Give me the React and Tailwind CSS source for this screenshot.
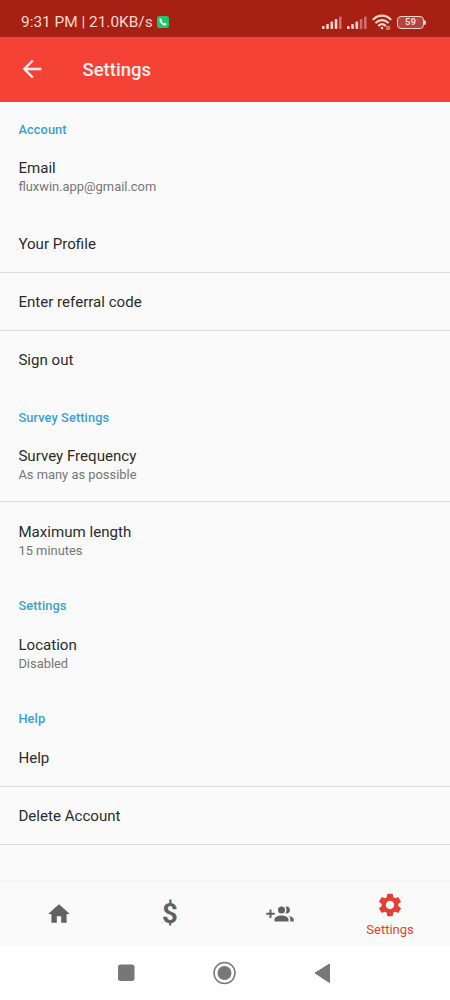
import { MdHome, MdSettings, MdArrowBack } from 'react-icons/md';

const sections = [
  {
    title: 'Account',
    rows: [
      { label: 'Email', value: 'fluxwin.app@gmail.com' },
      { label: 'Your Profile', divider: true },
      { label: 'Enter referral code', divider: true },
      { label: 'Sign out' },
    ],
  },
  {
    title: 'Survey Settings',
    rows: [
      { label: 'Survey Frequency', value: 'As many as possible', divider: true },
      { label: 'Maximum length', value: '15 minutes' },
    ],
  },
  { title: 'Settings', rows: [{ label: 'Location', value: 'Disabled' }] },
  {
    title: 'Help',
    rows: [
      { label: 'Help', divider: true },
      { label: 'Delete Account', divider: true },
    ],
  },
];

// Five bars, the ones above `level` are dimmed
function Signal({ level }) {
  return (
    <svg width="20" height="13" viewBox="0 0 20 13" fill="#f8d5cf">
      {[3, 5, 7.5, 10, 12.5].map((h, i) => (
        <rect key={h} x={i * 4.25} y={13 - h} width="2.6" height={h} rx="0.8" opacity={i < level ? 1 : 0.45} />
      ))}
    </svg>
  );
}

function StatusBar() {
  return (
    <div className="flex h-[37px] items-center bg-[#a81f14] pl-[21px] pr-[24px] pt-[7px] text-[#f8d9d3]">
      <span className="text-[15.4px] leading-[18px] whitespace-nowrap">9:31 PM | 21.0KB/s</span>
      <svg className="ml-[4px]" width="12" height="12" viewBox="0 0 12 12">
        <rect width="12" height="12" rx="2.5" fill="#22c565" />
        <path d="M3.2 2.6 4.5 2.4 5.2 4.2 4.5 5C5 6.2 5.8 7 7 7.5l.8-.7 1.8.7-.2 1.3C9 9.6 8.4 9.7 7.6 9.5 5 8.9 3.1 7 2.5 4.4 2.3 3.6 2.5 3 3.2 2.6z" fill="#e8fff0" />
      </svg>
      <div className="ml-auto flex items-center">
        <Signal level={4} />
        <div className="w-[5px]" />
        <Signal level={3} />
        <svg className="ml-[5px]" width="20" height="16" viewBox="0 0 20 16" fill="none" stroke="#f8d5cf" strokeWidth="2.2" strokeLinecap="round">
          <path d="M1.5 5.2C6.2.5 13.8.5 18.5 5.2M4.2 8.5c3.3-3.2 8.3-3.2 11.6 0M7 11.4c1.7-1.6 4.3-1.6 6 0" />
          <circle cx="10" cy="14" r="1.3" fill="#f8d5cf" stroke="none" />
          <path d="M14.5 12.8h3.2M14.5 14.8h3.2" strokeWidth="1.2" opacity=".8" />
        </svg>
        <div className="ml-[5px] flex h-[13px] w-[27px] items-center justify-center rounded-[4px] border-[1.5px] border-[#f8d5cf] bg-[#b5443c] text-[9.5px] font-bold leading-none">59</div>
        <div className="h-[5px] w-[2px] rounded-r bg-[#f8d5cf]" />
      </div>
    </div>
  );
}

function Row({ label, value, divider }) {
  return (
    <div className={`${value ? 'h-[75.5px]' : 'h-[58.3px]'} ${divider ? 'border-b border-[#dcdcdc]' : ''} px-[18.4px] pt-[19.2px]`}>
      <p className="text-[15.1px] leading-5 text-[#2b2b2b]">{label}</p>
      {value && <p className="text-[12.9px] leading-[17px] text-[#757575]">{value}</p>}
    </div>
  );
}

function GroupAddIcon() {
  return (
    <svg width="28" height="16" viewBox="0 0 28 16" fill="#616161">
      <path d="M3.5 3.5h2v3.2H8.7v2H5.5v3.2h-2V8.7H.3v-2h3.200z" />
      <circle cx="15.5" cy="4" r="3.5" />
      <path d="M8.5 15.500v-2c0-2.700 4.200-4 7-4s7 1.300 7 4v2z" />
      <path d="M19.400.6c2.400-.7 4.600 1 4.600 3.400s-2.200 4.100-4.600 3.400c1.500-2.100 1.500-4.700 0-6.800zM22.800 10c2.500.5 4.900 1.600 4.900 3.500v2h-3.400v-2c0-1.400-.5-2.600-1.500-3.500z" />
    </svg>
  );
}

function BottomNav() {
  return (
    <nav className="grid h-[64px] grid-cols-[118px_104px_116px_104px] items-center bg-[#fafafa] pb-[3px] text-[#616161]">
      <MdHome className="size-[26px] justify-self-center" />
      <span className="justify-self-center pt-px text-[27.5px] leading-[32px] font-bold">$</span>
      <div className="justify-self-center"><GroupAddIcon /></div>
      <div className="flex flex-col items-center pt-px text-[#e53e35]">
        <MdSettings className="size-[28px]" />
        <span className="mt-[3px] text-[13px] leading-[16px]">Settings</span>
      </div>
    </nav>
  );
}

function SystemNav() {
  return (
    <div className="flex h-[53px] justify-center bg-white">
      <svg width="214" height="52" viewBox="0 0 214 52" fill="#777">
        <rect x="0" y="17.5" width="16.5" height="16.5" rx="2.5" />
        <circle cx="106.5" cy="26" r="10.5" fill="none" stroke="#777" strokeWidth="1.5" />
        <circle cx="106.5" cy="26" r="7" />
        <path d="M197 26l14.500-9v18.500z" stroke="#777" strokeLinejoin="round" />
      </svg>
    </div>
  );
}

export default function App() {
  return (
    <div className="flex h-[1000px] w-[450px] flex-col overflow-hidden bg-[#fafafa] font-[Roboto,sans-serif]">
      <StatusBar />
      <header className="flex h-[64.5px] items-center bg-[#f44336] pl-[18px] text-[#fff1ee]">
        <MdArrowBack className="size-[28px]" />
        <h1 className="ml-[36.500px] pt-[3px] text-[18.5px] font-medium">Settings</h1>
      </header>
      <main className="flex-1">
        {sections.map((section) => (
          <section key={section.title}>
            <h2 className="h-[37.5px] px-[18.4px] pt-[20.5px] text-[12.8px] leading-4 font-medium tracking-[0.1px] text-[#3a9fd5]">{section.title}</h2>
            {section.rows.map((row) => (
              <Row key={row.label} {...row} />
            ))}
          </section>
        ))}
      </main>
      <div className="h-[6px] bg-linear-to-b from-[#fafafa] to-[#f6f6f6]" />
      <BottomNav />
      <SystemNav />
    </div>
  );
}
